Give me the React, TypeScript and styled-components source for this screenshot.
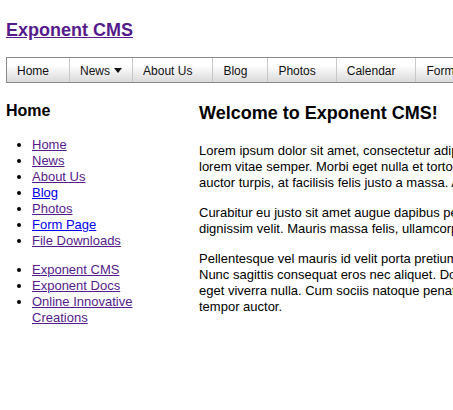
import React from "react";
import styled, { createGlobalStyle } from "styled-components";

const Global = createGlobalStyle`
  html, body { margin: 0; padding: 0; background: #fff; }
  body { font-family: "Liberation Sans", Arial, sans-serif; color: #000; }
`;

const Page = styled.div`
  width: 900px;
  padding: 0 6px;
`;

const Header = styled.div`
  padding-top: 20px;
  height: 37px;
`;

const SiteTitle = styled.a`
  font-size: 18px;
  font-weight: bold;
  line-height: 21px;
  color: #551a8b;
  text-decoration: underline;
`;

const Nav = styled.ul`
  list-style: none;
  margin: 0;
  padding: 0;
  display: flex;
  height: 24px;
  border: 1px solid #8a8a8a;
  background: linear-gradient(#ffffff 30%, #dadada);
`;

const NavItem = styled.li`
  display: flex;
  align-items: center;
  padding: 1px 20px 0 10px;
  font-size: 12px;
  color: #111;
  border-left: 1px solid #c8c8c8;
  &:first-child { border-left: none; }
`;

const NavNews = styled(NavItem)`
  padding-right: 10px;
  gap: 4px;
`;

const Columns = styled.div`
  display: flex;
  margin-top: 18px;
`;

const Sidebar = styled.div`
  width: 193px;
  flex: none;
`;

const SideTitle = styled.h2`
  font-size: 16px;
  font-weight: bold;
  margin: 0 0 17px;
  line-height: 19px;
`;

const LinkList = styled.ul`
  margin: 0 0 13px;
  padding-left: 26px;
  font-size: 13px;
  line-height: 16px;
  width: 120px;
`;

const Link = styled.a<{ $fresh?: boolean }>`
  color: ${(p) => (p.$fresh ? "#0000ee" : "#551a8b")};
  text-decoration: underline;
`;

const Main = styled.div`
  width: 600px;
`;

const MainTitle = styled.h1`
  font-size: 18px;
  font-weight: bold;
  margin: 2px 0 19px;
  line-height: 21px;
`;

const Para = styled.p`
  font-size: 13px;
  line-height: 16px;
  margin: 0 0 14px;
  white-space: nowrap;
`;

const Arrow = () => (
  <svg width="8" height="5" viewBox="0 0 8 5">
    <path d="M0 0h8L4 5z" fill="#111" />
  </svg>
);

const paragraphs = [
  [
    "Lorem ipsum dolor sit amet, consectetur adipiscing elit. Nulla facilisi. Sed vel",
    "lorem vitae semper. Morbi eget nulla et tortor aliquet ultricies. Nam vel",
    "auctor turpis, at facilisis felis justo a massa. Aenean in dui vel nisl.",
  ],
  [
    "Curabitur eu justo sit amet augue dapibus pellentesque sed quis nisi. Proin",
    "dignissim velit. Mauris massa felis, ullamcorper a tincidunt vitae.",
  ],
  [
    "Pellentesque vel mauris id velit porta pretium eu ac metus. Vivamus id",
    "Nunc sagittis consequat eros nec aliquet. Donec pharetra mauris quis neque",
    "eget viverra nulla. Cum sociis natoque penatibus et magnis dis parturient",
    "tempor auctor.",
  ],
];

export default function App() {
  return (
    <Page>
      <Global />
      <Header>
        <SiteTitle href="#">Exponent CMS</SiteTitle>
      </Header>
      <Nav>
        <NavItem>Home</NavItem>
        <NavNews>News <Arrow /></NavNews>
        <NavItem>About Us</NavItem>
        <NavItem>Blog</NavItem>
        <NavItem>Photos</NavItem>
        <NavItem>Calendar</NavItem>
        <NavItem>Form Page</NavItem>
        <NavItem>File Downloads</NavItem>
      </Nav>
      <Columns>
        <Sidebar>
          <SideTitle>Home</SideTitle>
          <LinkList>
            <li><Link href="#">Home</Link></li>
            <li><Link href="#">News</Link></li>
            <li><Link href="#">About Us</Link></li>
            <li><Link href="#" $fresh>Blog</Link></li>
            <li><Link href="#">Photos</Link></li>
            <li><Link href="#" $fresh>Form Page</Link></li>
            <li><Link href="#">File Downloads</Link></li>
          </LinkList>
          <LinkList>
            <li><Link href="#">Exponent CMS</Link></li>
            <li><Link href="#">Exponent Docs</Link></li>
            <li><Link href="#">Online Innovative Creations</Link></li>
          </LinkList>
        </Sidebar>
        <Main>
          <MainTitle>Welcome to Exponent CMS!</MainTitle>
          {paragraphs.map((lines, i) => (
            <Para key={i}>
              {lines.map((l, j) => (
                <React.Fragment key={j}>
                  {l}
                  {j < lines.length - 1 && <br />}
                </React.Fragment>
              ))}
            </Para>
          ))}
        </Main>
      </Columns>
    </Page>
  );
}
